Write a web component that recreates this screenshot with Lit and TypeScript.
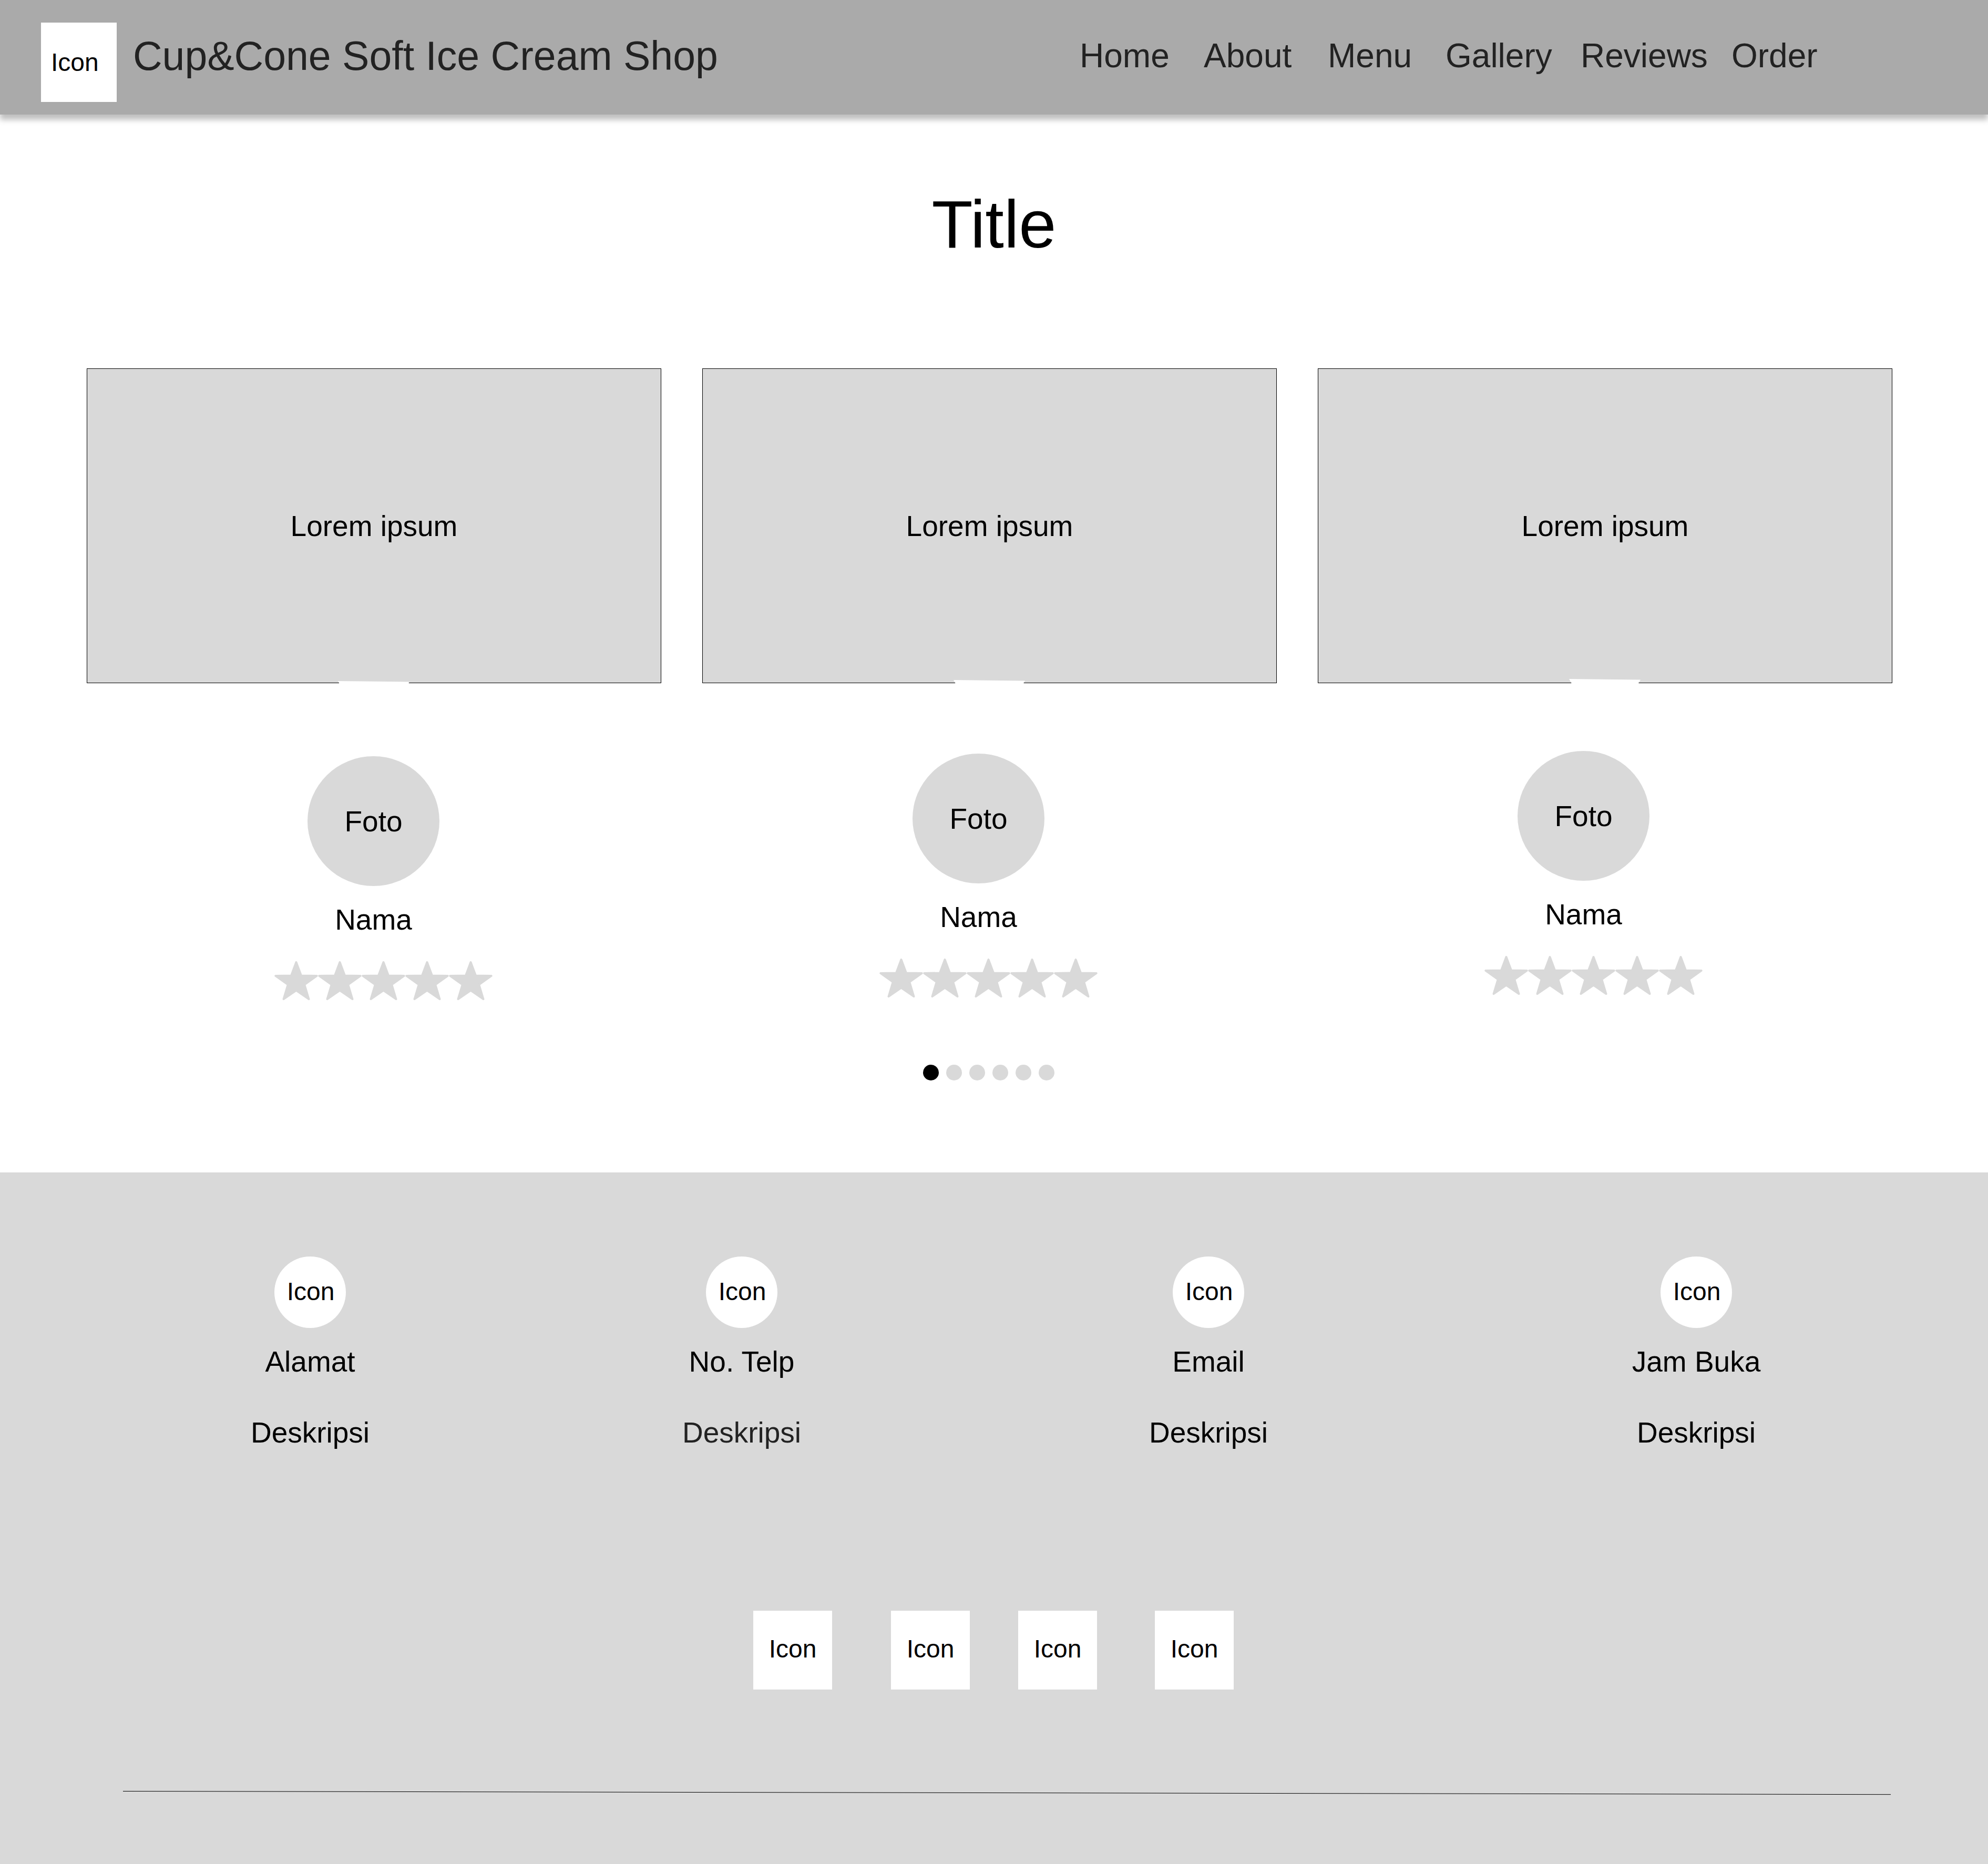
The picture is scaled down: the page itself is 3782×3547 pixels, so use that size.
import { LitElement, html, css, svg } from "lit";
import { customElement } from "lit/decorators.js";
import { styleMap } from "lit/directives/style-map.js";

const NAV = ["Home", "About", "Menu", "Gallery", "Reviews", "Order"];

const REVIEWS = [
  { text: "Lorem ipsum", name: "Nama", rating: 5 },
  { text: "Lorem ipsum", name: "Nama", rating: 5 },
  { text: "Lorem ipsum", name: "Nama", rating: 5 },
];

const CONTACTS = [
  { label: "Alamat", text: "Deskripsi", soft: false },
  { label: "No. Telp", text: "Deskripsi", soft: true },
  { label: "Email", text: "Deskripsi", soft: false },
  { label: "Jam Buka", text: "Deskripsi", soft: false },
];

const SOCIALS = ["Icon", "Icon", "Icon", "Icon"];
const SLIDES = 6;

/* Steps left before the last review; the row climbs by one step per column. */
const stepsFor = (index: number) =>
  styleMap({ "--steps": String(REVIEWS.length - 1 - index) });

@customElement("site-header")
class SiteHeader extends LitElement {
  static styles = css`
    :host {
      display: block;
    }
    .bar {
      display: flex;
      align-items: flex-start;
      justify-content: space-between;
      gap: 64px;
      padding: 43px 324px 24px 78px;
      background: #aaaaaa;
      box-shadow: 0 10px 10px rgba(0, 0, 0, 0.25);
      color: #222222;
    }
    .brand {
      display: flex;
      gap: 31px;
      flex: none;
      color: inherit;
      text-decoration: none;
    }
    .logo {
      box-sizing: border-box;
      display: flex;
      align-items: center;
      width: 144px;
      height: 151px;
      padding-left: 19px;
      background: #ffffff;
      color: #000000;
      font-size: 48px;
    }
    .name {
      font-size: 77px;
      line-height: 126px;
      white-space: nowrap;
    }
    .nav {
      display: grid;
      grid-template-columns: 236fr 236fr 224fr 257fr 287fr 164fr;
      flex: 1;
      max-width: 1404px;
      font-size: 64px;
      line-height: 126px;
    }
    .link {
      color: inherit;
      text-decoration: none;
    }
  `;

  render() {
    return html`
      <header class="bar">
        <a class="brand" href="#home">
          <span class="logo">Icon</span>
          <span class="name">Cup&amp;Cone Soft Ice Cream Shop</span>
        </a>
        <nav class="nav">
          ${NAV.map(
            (item) =>
              html`<a class="link" href="#${item.toLowerCase()}">${item}</a>`
          )}
        </nav>
      </header>
    `;
  }
}

@customElement("star-rating")
class StarRating extends LitElement {
  static properties = { value: { type: Number } };
  declare value: number;

  static styles = css`
    :host {
      display: block;
    }
    .stars {
      display: flex;
    }
    .star {
      display: block;
      width: 83px;
      height: 76px;
      fill: #d9d9d9;
      stroke: #d9d9d9;
      stroke-width: 4;
      stroke-linejoin: round;
    }
  `;

  constructor() {
    super();
    this.value = 5;
  }

  render() {
    return html`
      <div class="stars" role="img" aria-label="${this.value} / 5">
        ${Array.from(
          { length: this.value },
          () => html`
            <svg class="star" viewBox="0 0 83 76" aria-hidden="true">
              ${svg`<path d="M41.5 3 L51 28.5 L80.7 28.9 L57.2 45.5 L65.5 73.2 L41.5 56.5 L17.5 73.2 L25.8 45.5 L2.3 28.9 L32 28.5 Z"/>`}
            </svg>
          `
        )}
      </div>
    `;
  }
}

@customElement("review-section")
class ReviewSection extends LitElement {
  static properties = { active: { state: true } };
  declare active: number;

  static styles = css`
    :host {
      display: block;
    }
    .section {
      padding: 137px 0 175px;
    }
    .title {
      margin: 0 0 202px;
      font-size: 128px;
      font-weight: 400;
      line-height: 144px;
      text-align: center;
    }
    .cards {
      display: grid;
      grid-template-columns: repeat(3, 1fr);
      gap: 78px;
      padding: 0 182px 0 165px;
    }
    .card {
      position: relative;
      box-sizing: border-box;
      display: flex;
      align-items: center;
      justify-content: center;
      height: 599px;
      margin: 0;
      border: 1px solid #000000;
      background: #d9d9d9;
      font-size: 55px;
      line-height: 64px;
    }
    .tail {
      position: absolute;
      top: calc(100% - 7px + var(--steps) * 2px);
      left: calc(50% - 69px);
      width: 136px;
      height: 118px;
      fill: #ffffff;
    }
    .people {
      display: flex;
      justify-content: space-between;
      align-items: flex-start;
      padding: 129px 543px 0 522px;
    }
    .person {
      margin-top: calc(var(--steps) * 5px);
      font-size: 55px;
      line-height: 64px;
    }
    .identity {
      display: flex;
      flex-direction: column;
      align-items: center;
      gap: 32px;
      width: 377px;
      margin-bottom: 46px;
    }
    .photo {
      display: flex;
      align-items: center;
      justify-content: center;
      width: 251px;
      height: 247px;
      border-radius: 50%;
      background: #d9d9d9;
    }
    .dots {
      display: flex;
      justify-content: center;
      gap: 14px;
      padding: 122px 183px 0 163px;
    }
    .dot {
      width: 30px;
      height: 30px;
      padding: 0;
      border: 0;
      border-radius: 50%;
      background: #d9d9d9;
      cursor: pointer;
    }
    .dot[aria-current="true"] {
      background: #000000;
    }
  `;

  constructor() {
    super();
    this.active = 0;
  }

  render() {
    return html`
      <section class="section">
        <h1 class="title">Title</h1>
        <div class="cards">
          ${REVIEWS.map(
            (review, i) => html`
              <blockquote class="card" style=${stepsFor(i)}>
                ${review.text}
                <svg class="tail" viewBox="0 0 136 118" aria-hidden="true">
                  ${svg`<polygon points="0,0 136,1.5 67,118"/>`}
                </svg>
              </blockquote>
            `
          )}
        </div>
        <div class="people">
          ${REVIEWS.map(
            (review, i) => html`
              <div class="person" style=${stepsFor(i)}>
                <div class="identity">
                  <span class="photo">Foto</span>
                  <span>${review.name}</span>
                </div>
                <star-rating .value=${review.rating}></star-rating>
              </div>
            `
          )}
        </div>
        <div class="dots">
          ${Array.from(
            { length: SLIDES },
            (_, i) => html`
              <button
                class="dot"
                type="button"
                aria-label="Slide ${i + 1}"
                aria-current=${i === this.active ? "true" : "false"}
                @click=${() => (this.active = i)}
              ></button>
            `
          )}
        </div>
      </section>
    `;
  }
}

@customElement("site-footer")
class SiteFooter extends LitElement {
  static styles = css`
    :host {
      display: flex;
    }
    .footer {
      flex: 1;
      padding: 160px 0 131px;
      background: #d9d9d9;
    }
    .contacts {
      display: grid;
      grid-template-columns: 820fr 822fr 954fr 902fr;
      padding: 0 104px 0 180px;
      font-size: 55px;
      line-height: 64px;
    }
    .contact {
      display: flex;
      flex-direction: column;
      align-items: center;
    }
    .round {
      box-sizing: border-box;
      display: flex;
      align-items: center;
      justify-content: center;
      width: 136px;
      height: 136px;
      padding: 0 0 2px 2px;
      border-radius: 50%;
      background: #ffffff;
      font-size: 48px;
    }
    .label {
      margin: 32px 0 71px;
      font-size: inherit;
      font-weight: 400;
    }
    .text {
      margin: 0;
    }
    .soft {
      color: #222222;
    }
    .socials {
      display: grid;
      grid-template-columns: 262px 242px 260px 150px;
      justify-content: center;
      padding: 307px 2px 193px 0;
    }
    .square {
      box-sizing: border-box;
      display: flex;
      align-items: center;
      justify-content: center;
      width: 150px;
      height: 150px;
      padding-bottom: 6px;
      background: #ffffff;
      color: #000000;
      font-size: 48px;
      text-decoration: none;
    }
    .rule {
      padding: 0 185px 0 234px;
    }
    .line {
      display: block;
      width: 100%;
      height: 8px;
      stroke: #000000;
      stroke-width: 1;
    }
  `;

  render() {
    return html`
      <footer class="footer">
        <div class="contacts">
          ${CONTACTS.map(
            (contact) => html`
              <div class="contact">
                <span class="round">Icon</span>
                <h2 class="label">${contact.label}</h2>
                <p class="text ${contact.soft ? "soft" : ""}">
                  ${contact.text}
                </p>
              </div>
            `
          )}
        </div>
        <div class="socials">
          ${SOCIALS.map(
            (name) => html`<a class="square" href="#social">${name}</a>`
          )}
        </div>
        <div class="rule">
          <svg
            class="line"
            viewBox="0 0 3363 8"
            preserveAspectRatio="none"
            aria-hidden="true"
          >
            ${svg`<line x1="0" y1="0.5" x2="3363" y2="6.7" vector-effect="non-scaling-stroke"/>`}
          </svg>
        </div>
      </footer>
    `;
  }
}

@customElement("app-root")
class AppRoot extends LitElement {
  static styles = css`
    :host {
      display: flex;
      flex-direction: column;
      min-height: 100vh;
      background: #ffffff;
      color: #000000;
      font-family: "Liberation Sans", Arial, sans-serif;
    }
    .head {
      position: relative;
    }
    .foot {
      flex: 1;
    }
  `;

  render() {
    return html`
      <site-header class="head"></site-header>
      <main><review-section></review-section></main>
      <site-footer class="foot"></site-footer>
    `;
  }
}
